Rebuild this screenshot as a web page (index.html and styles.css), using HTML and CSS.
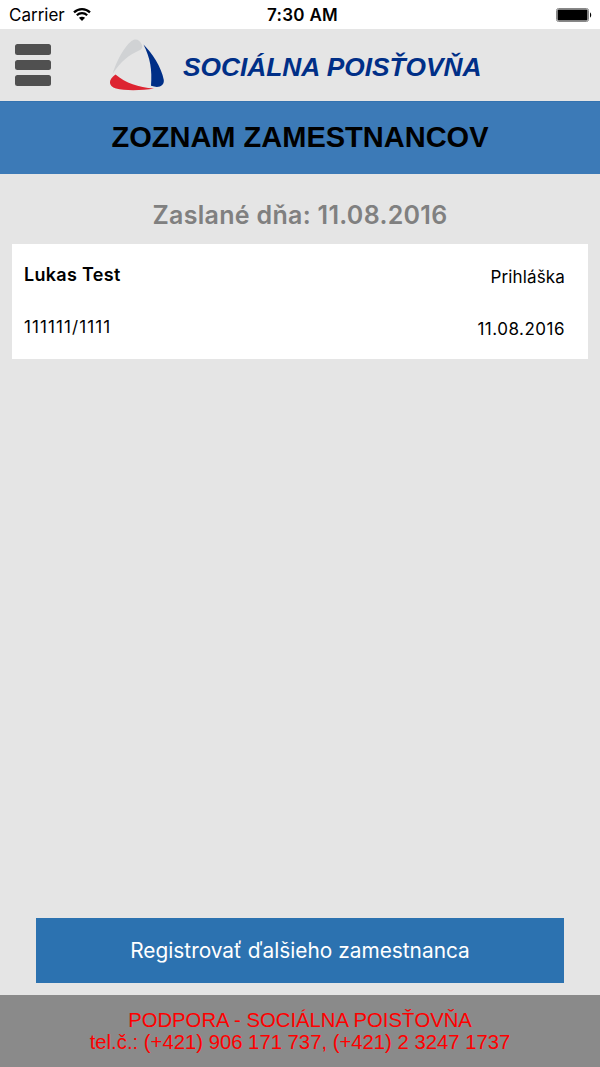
FILE: index.html
```html
<!DOCTYPE html>
<html lang="sk">
<head>
  <meta charset="utf-8">
  <title>Zoznam zamestnancov</title>
  <meta name="viewport" content="width=device-width, initial-scale=1">

  <link rel="stylesheet" href="styles.css">
</head>

<body>
  <div class="statusbar">
    <div class="carrier">
      <span>Carrier</span>
      <svg class="wifi" width="18" height="13" viewBox="0 0 18 13">
        <path d="M1 4.4C5.5 0 12.5 0 17 4.4" fill="none" stroke="#000" stroke-width="2.2"/>
        <path d="M3.8 7.3C6.8 4.5 11.2 4.5 14.2 7.3" fill="none" stroke="#000" stroke-width="2.2"/>
        <path d="M9 13L5.9 9.8C7.7 8.3 10.3 8.3 12.1 9.8Z"/>
      </svg>
    </div>
    <div class="clock">7:30 AM</div>
    <svg class="battery" width="36" height="15" viewBox="0 0 36 15">
      <rect x=".5" y=".5" width="32" height="13" rx="2" fill="#fff" stroke="#888"/>
      <rect x="1.5" y="1.5" width="30" height="11" rx="1"/>
      <path d="M34 4.5C35.6 5.1 35.6 8.9 34 9.5Z"/>
    </svg>
  </div>

  <div class="header">
    <div class="menu">
      <span></span>
      <span></span>
      <span></span>
    </div>
    <svg class="logo" width="56" height="53" viewBox="0 0 56 53">
      <path d="M3.5 35C8 21 15 8 22.5 2C26-1 31 .2 33 6C33.5 8 33 10 31 11C20 16 12 22 3.5 35Z" fill="#d0d2d4"/>
      <path d="M34.5 5.5C43 14 52.5 28 54.8 41C55.3 47 50 49.5 42 46.8C43.3 31 41.3 19 34.5 5.5Z" fill="#002f87"/>
      <path d="M6.5 35.5C17 44 29 48.5 45 49.5C34 51.5 16 52 7 49.5C-1 47 -1 41 6.5 35.5Z" fill="#dd2431"/>
    </svg>
    <div class="brand">SOCIÁLNA POISŤOVŇA</div>
  </div>

  <div class="title">ZOZNAM ZAMESTNANCOV</div>

  <div class="content">
    <div class="sent">Zaslané dňa: 11.08.2016</div>

    <div class="card">
      <div class="person">
        <div class="name">Lukas Test</div>
        <div class="number">111111/1111</div>
      </div>
      <div class="info">
        <div class="type">Prihláška</div>
        <div class="date">11.08.2016</div>
      </div>
    </div>

    <button class="register">Registrovať ďalšieho zamestnanca</button>
  </div>

  <div class="footer">
    <div class="support">PODPORA - SOCIÁLNA POISŤOVŇA</div>
    <div class="phone">tel.č.: (+421) 906 171 737, (+421) 2 3247 1737</div>
  </div>
</body>
</html>
```
FILE: styles.css
```css
html, body {
  height: 100%;
  margin: 0;
}

body {
  display: flex;
  flex-flow: column nowrap;
  background-color: #e5e5e5;
  color: #000;
  font-family: Inter, "Open Sans", sans-serif;
  font-size: 17px;
}

.statusbar {
  box-sizing: border-box;
  height: 29px;
  display: grid;
  grid-template-columns: 1fr auto 1fr;
  align-items: center;
  padding: 1px 8px 0 9px;
  background-color: #fff;
  line-height: 28px;
}

.carrier {
  display: flex;
  align-items: center;
  gap: 8px;
}

.wifi {
  margin-top: -2px;
}

.clock {
  padding-left: 4px;
  font-weight: 600;
  letter-spacing: .3px;
}

.battery {
  justify-self: end;
}

.header {
  box-sizing: border-box;
  height: 72px;
  display: flex;
  align-items: center;
  padding: 0 15px;
}

.menu {
  display: flex;
  flex-flow: column nowrap;
  gap: 5px;
}

.menu span {
  width: 36px;
  height: 10.5px;
  border-radius: 2.5px;
  background-color: #505050;
}

.logo {
  margin-left: 58px;
}

.brand {
  margin: 3px 0 0 18px;
  font: italic bold 26.3px/30px "Liberation Sans", Arial, sans-serif;
  color: #002f87;
  white-space: nowrap;
}

.title {
  box-sizing: border-box;
  height: 73px;
  border-top: 1px solid #3473b0;
  background-color: #3c7ab7;
  font: bold 29px/71px "Liberation Sans", Arial, sans-serif;
  text-align: center;
}

.content {
  flex: 1;
  display: flex;
  flex-flow: column nowrap;
  padding: 24px 12px 12px;
}

.sent {
  height: 46px;
  font-size: 25px;
  font-weight: 600;
  line-height: 34px;
  letter-spacing: .3px;
  color: #808080;
  text-align: center;
}

.card {
  box-sizing: border-box;
  height: 115px;
  display: flex;
  justify-content: space-between;
  padding: 20px 23px 0 12px;
  background-color: #fff;
  line-height: 22px;
}

.name {
  font-size: 18px;
  font-weight: 600;
  letter-spacing: .3px;
}

.number {
  margin-top: 30px;
  letter-spacing: 1.1px;
}

.info {
  padding-top: 2px;
  text-align: right;
}

.type {
  letter-spacing: .15px;
}

.date {
  margin-top: 30px;
  letter-spacing: .5px;
}

.register {
  height: 65px;
  margin: auto 24px 0;
  padding: 0;
  border: 0;
  background-color: #2c72b0;
  color: #fff;
  font: 20.85px Inter, "Open Sans", sans-serif;
}

.footer {
  box-sizing: border-box;
  height: 72px;
  padding-top: 14px;
  background-color: #8a8a8a;
  color: #f00;
  font: 20.3px/22px "Liberation Sans", Arial, sans-serif;
  text-align: center;
}
```
